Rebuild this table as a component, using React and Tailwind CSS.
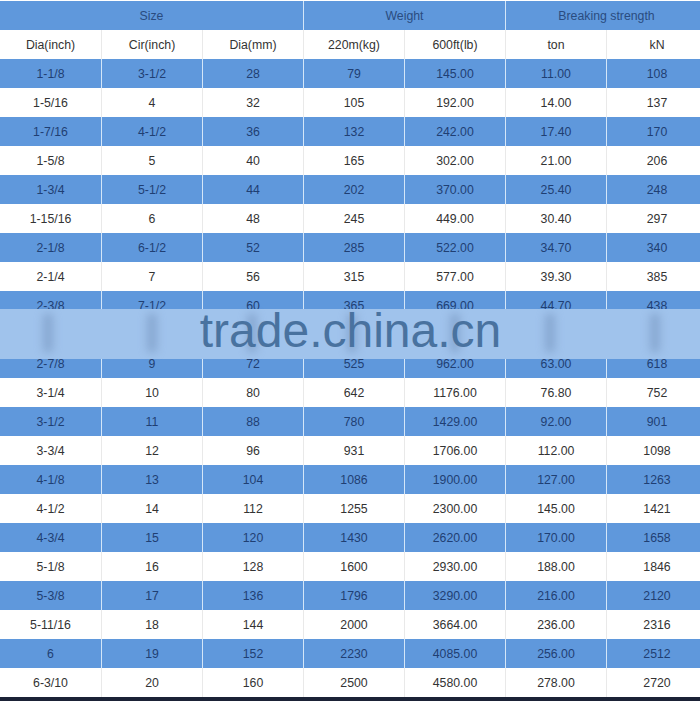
import React from 'react';

const rows = [
  ['1-1/8', '3-1/2', '28', '79', '145.00', '11.00', '108'],
  ['1-5/16', '4', '32', '105', '192.00', '14.00', '137'],
  ['1-7/16', '4-1/2', '36', '132', '242.00', '17.40', '170'],
  ['1-5/8', '5', '40', '165', '302.00', '21.00', '206'],
  ['1-3/4', '5-1/2', '44', '202', '370.00', '25.40', '248'],
  ['1-15/16', '6', '48', '245', '449.00', '30.40', '297'],
  ['2-1/8', '6-1/2', '52', '285', '522.00', '34.70', '340'],
  ['2-1/4', '7', '56', '315', '577.00', '39.30', '385'],
  ['2-3/8', '7-1/2', '60', '365', '669.00', '44.70', '438'],
  // row under the watermark, unreadable in the source
  ['', '', '', '', '', '', ''],
  ['2-7/8', '9', '72', '525', '962.00', '63.00', '618'],
  ['3-1/4', '10', '80', '642', '1176.00', '76.80', '752'],
  ['3-1/2', '11', '88', '780', '1429.00', '92.00', '901'],
  ['3-3/4', '12', '96', '931', '1706.00', '112.00', '1098'],
  ['4-1/8', '13', '104', '1086', '1900.00', '127.00', '1263'],
  ['4-1/2', '14', '112', '1255', '2300.00', '145.00', '1421'],
  ['4-3/4', '15', '120', '1430', '2620.00', '170.00', '1658'],
  ['5-1/8', '16', '128', '1600', '2930.00', '188.00', '1846'],
  ['5-3/8', '17', '136', '1796', '3290.00', '216.00', '2120'],
  ['5-11/16', '18', '144', '2000', '3664.00', '236.00', '2316'],
  ['6', '19', '152', '2230', '4085.00', '256.00', '2512'],
  ['6-3/10', '20', '160', '2500', '4580.00', '278.00', '2720'],
];

const subHeads = ['Dia(inch)', 'Cir(inch)', 'Dia(mm)', '220m(kg)', '600ft(lb)', 'ton', 'kN'];

// smudges left by the blurred watermark
const smudges = [48, 152, 252, 352, 455, 550, 655];

const Row = ({ cells, blue }) => (
  <div
    className={`grid grid-cols-[101px_101px_101px_101px_101px_101px_101px] h-[29px] ${
      blue ? 'bg-[#5f98dc] text-[#1f3f73]' : 'bg-white text-[#333333]'
    }`}
  >
    {cells.map((c, i) => (
      <div
        key={i}
        className={`flex items-center justify-center pt-px ${
          i > 0 ? (blue ? 'border-l border-[#d4e6f8]' : 'border-l border-[#e9e9e9]') : ''
        }`}
      >
        {c}
      </div>
    ))}
  </div>
);

export default function App() {
  return (
    <div
      className="relative w-[700px] h-[701px] overflow-hidden bg-white text-[12.3px]"
      style={{ fontFamily: '"Liberation Sans", Arial, sans-serif' }}
    >
      <div className="w-[707px] pt-px">
        {/* group header */}
        <div className="grid grid-cols-[303px_202px_202px] h-[29px] bg-[#5f98dc] text-[#2a4c80]">
          <div className="flex items-center justify-center pt-px">Size</div>
          <div className="flex items-center justify-center pt-px border-l border-[#d4e6f8]">Weight</div>
          <div className="flex items-center justify-center pt-px border-l border-[#d4e6f8]">Breaking strength</div>
        </div>
        <Row cells={subHeads} blue={false} />
        {rows.map((r, i) => (
          <Row key={i} cells={r} blue={i % 2 === 0} />
        ))}
      </div>

      {/* bottom edge */}
      <div className="absolute left-0 right-0 top-[697px] h-[4px] bg-[#1b2236]" />

      {/* watermark */}
      <div className="absolute left-0 right-0 top-[309px] h-[50px] bg-[#a0c3ec] flex items-center justify-center">
        {smudges.map((x) => (
          <div
            key={x}
            className="absolute top-[4px] h-[40px] w-[10px] rounded-full bg-[#6f8eb8]/50 blur-[4px]"
            style={{ left: x - 5 }}
          />
        ))}
        <span className="relative text-[48px] leading-none text-[#49729f] -mt-[6px] ml-[1px]">trade.china.cn</span>
      </div>
    </div>
  );
}
